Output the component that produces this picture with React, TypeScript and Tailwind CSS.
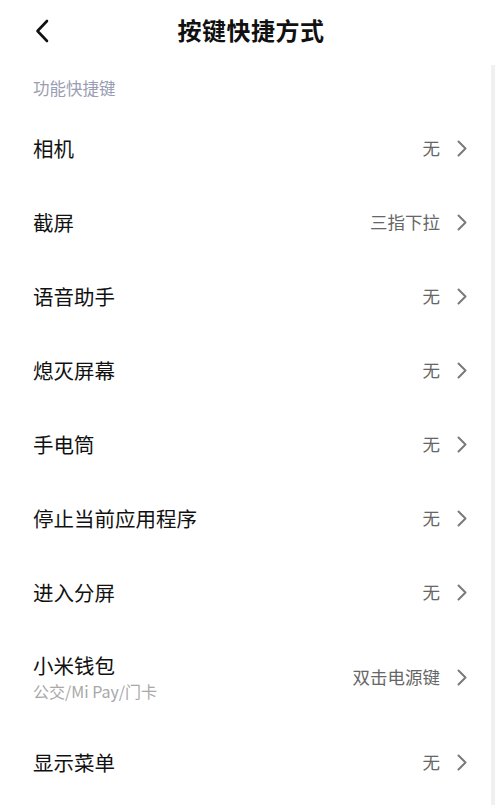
import React from "react";

const font = { fontFamily: '"Noto Sans CJK SC", "Noto Sans", sans-serif' };

function Chevron() {
  return (
    <svg width="10" height="17" viewBox="0 0 10 17" fill="none" className="shrink-0">
      <path d="M1.5 1.5 L8.5 8.5 L1.5 15.5" stroke="#7a7a7a" strokeWidth="2" strokeLinecap="round" strokeLinejoin="round" />
    </svg>
  );
}

type Item = { label: string; value: string; sub?: string };

const items: Item[] = [
  { label: "相机", value: "无" },
  { label: "截屏", value: "三指下拉" },
  { label: "语音助手", value: "无" },
  { label: "熄灭屏幕", value: "无" },
  { label: "手电筒", value: "无" },
  { label: "停止当前应用程序", value: "无" },
  { label: "进入分屏", value: "无" },
  { label: "小米钱包", value: "双击电源键", sub: "公交/Mi Pay/门卡" },
  { label: "显示菜单", value: "无" },
];

export default function App() {
  return (
    <div className="w-[500px] h-[805px] bg-white overflow-hidden flex flex-col" style={font}>
      <div className="h-[60px] shrink-0 flex items-center relative">
        <div className="pl-[35px] pt-[1px]">
          <svg width="14" height="24" viewBox="0 0 14 24" fill="none">
            <path d="M12 2 L2.5 12 L12 22" stroke="#111" strokeWidth="2.6" strokeLinecap="round" strokeLinejoin="round" />
          </svg>
        </div>
        <div className="absolute left-0 right-0 top-0 h-[60px] flex items-center justify-center pl-[2px] text-[24px] font-bold text-[#111] tracking-[0.5px]">
          按键快捷方式
        </div>
      </div>
      <div className="flex-1 flex">
        <div className="flex-1 flex flex-col">
          <div className="h-[51px] shrink-0 pl-[33px] pt-[16px] text-[16.5px] text-[#9a9db3] leading-[24px]">
            功能快捷键
          </div>
          {items.map((it) => (
            <div
              key={it.label}
              className={`${it.sub ? "h-[96px]" : "h-[74px]"} shrink-0 flex items-center pl-[33px] pr-[24px]`}
            >
              <div className="flex-1 flex flex-col">
                <div className={`text-[20.5px] text-[#111] ${it.sub ? "leading-[25px]" : "leading-[26px]"}`}>{it.label}</div>
                {it.sub && (
                  <div className="text-[16px] text-[#a8a8a8] leading-[22px] mt-[2px]">{it.sub}</div>
                )}
              </div>
              <div className="text-[17.5px] text-[#666] leading-[24px] mr-[17px]">{it.value}</div>
              <Chevron />
            </div>
          ))}
        </div>
        <div className="w-[4px] bg-[#f0f0f0] mt-[5px] mr-[5px] shrink-0" />
      </div>
    </div>
  );
}
